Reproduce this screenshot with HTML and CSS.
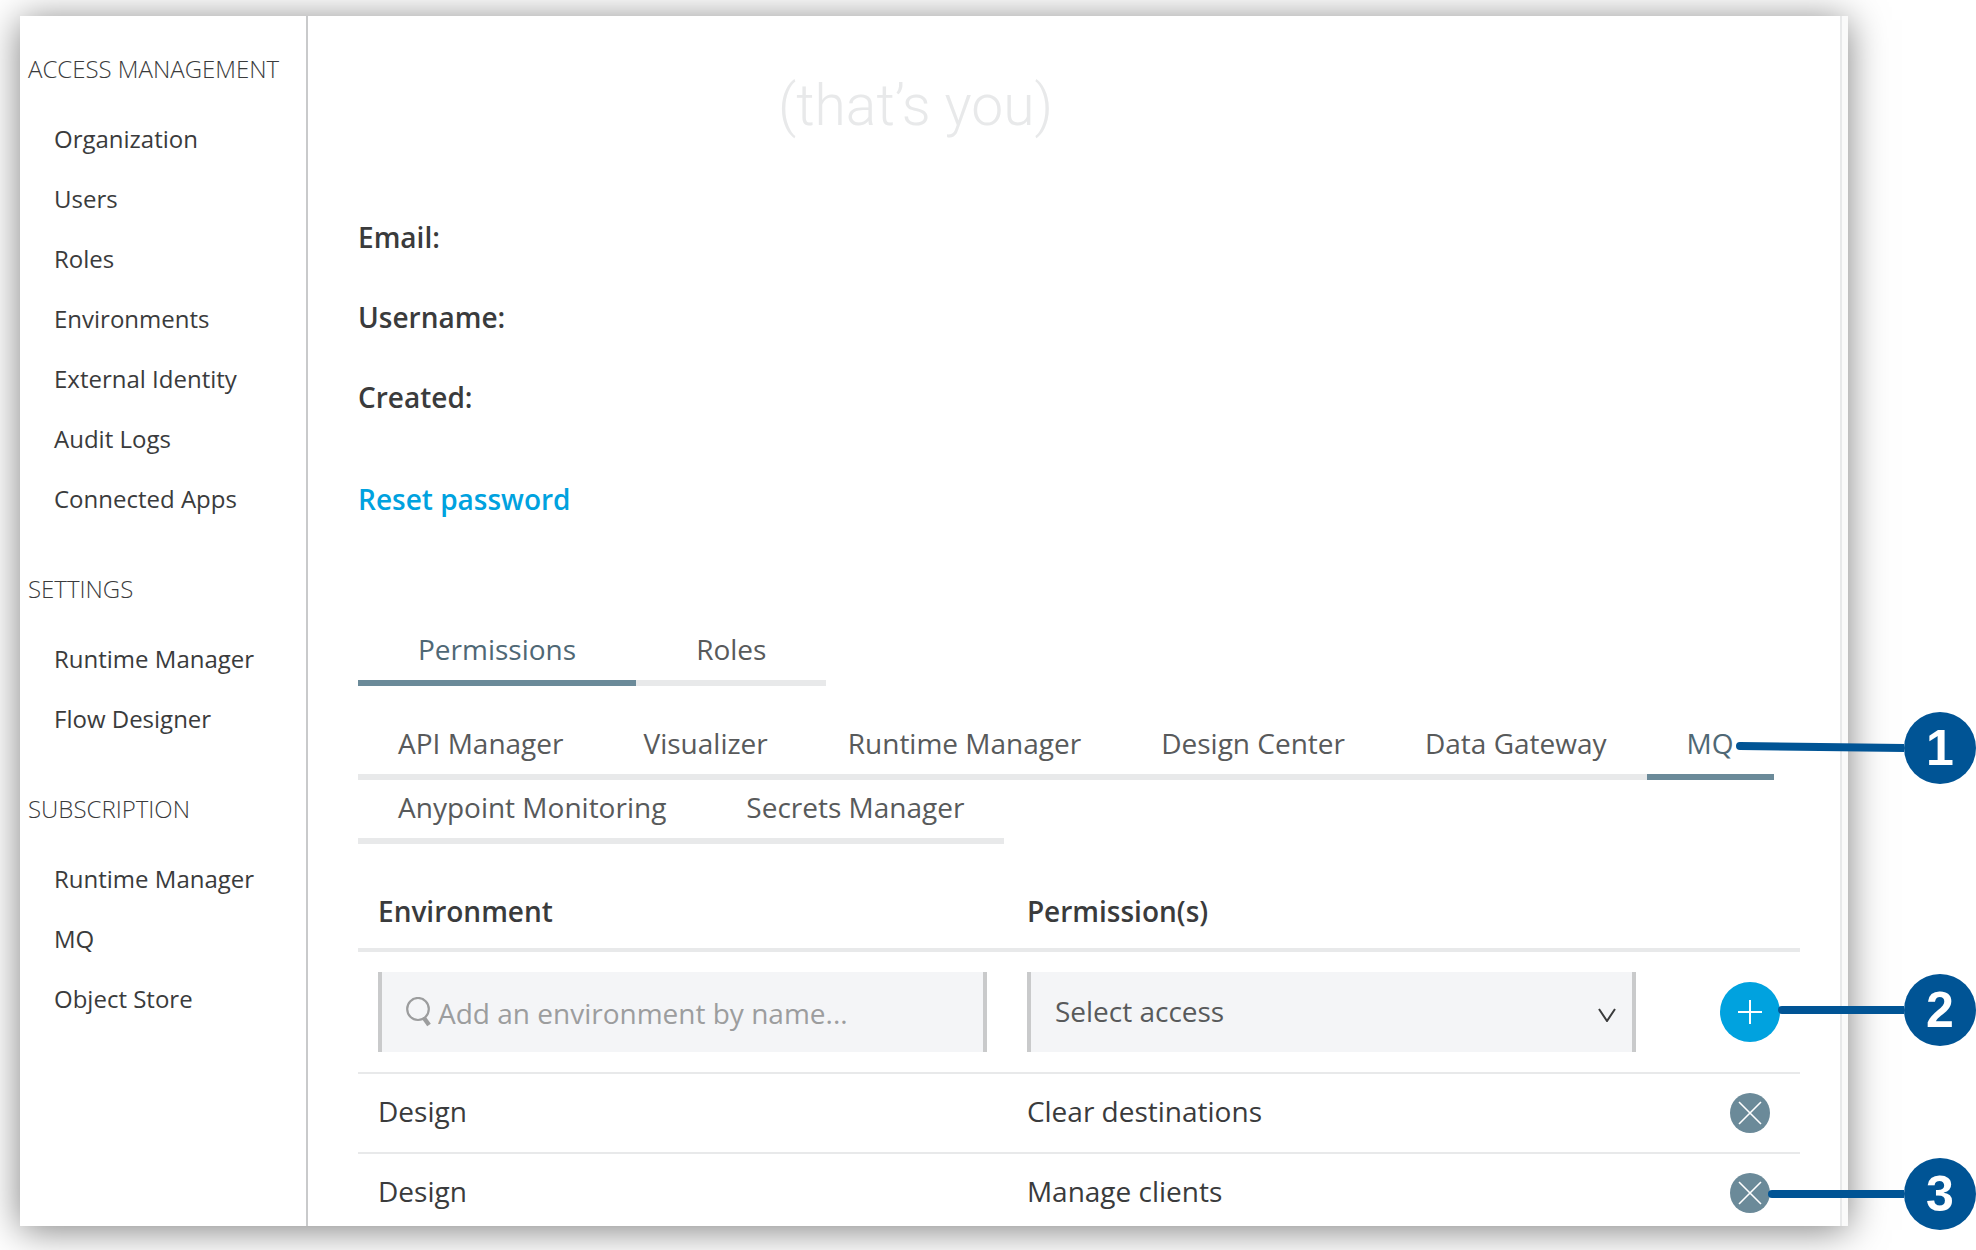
FILE: index.html
```html
<!DOCTYPE html>
<html lang="en">
<head>
<meta charset="utf-8">
<title>Access Management</title>
<link rel="stylesheet" href="styles.css">
</head>
<body>
<div class="window">
  <nav class="sidebar">
    <h2 class="nav-title">ACCESS MANAGEMENT</h2>
    <ul class="nav-list">
      <li><a href="#organization">Organization</a></li>
      <li><a href="#users">Users</a></li>
      <li><a href="#roles">Roles</a></li>
      <li><a href="#environments">Environments</a></li>
      <li><a href="#identity">External Identity</a></li>
      <li><a href="#audit">Audit Logs</a></li>
      <li><a href="#apps">Connected Apps</a></li>
    </ul>
    <h2 class="nav-title">SETTINGS</h2>
    <ul class="nav-list">
      <li><a href="#settings-runtime">Runtime Manager</a></li>
      <li><a href="#flow">Flow Designer</a></li>
    </ul>
    <h2 class="nav-title">SUBSCRIPTION</h2>
    <ul class="nav-list">
      <li><a href="#subscription-runtime">Runtime Manager</a></li>
      <li><a href="#mq">MQ</a></li>
      <li><a href="#store">Object Store</a></li>
    </ul>
  </nav>
  <main class="main">
    <h1 class="you">(that’s you)</h1>
    <dl class="profile">
      <dt>Email:</dt>
      <dt>Username:</dt>
      <dt>Created:</dt>
    </dl>
    <a class="reset" href="#reset">Reset password</a>
    <div class="tabs tabs-main">
      <button class="tab active" type="button">Permissions</button>
      <button class="tab" type="button">Roles</button>
    </div>
    <div class="tabs tabs-sub">
      <button class="tab" type="button">API Manager</button>
      <button class="tab" type="button">Visualizer</button>
      <button class="tab" type="button">Runtime Manager</button>
      <button class="tab" type="button">Design Center</button>
      <button class="tab" type="button">Data Gateway</button>
      <button class="tab active" type="button">MQ</button>
      <button class="tab" type="button">Anypoint Monitoring</button>
      <button class="tab" type="button">Secrets Manager</button>
    </div>
    <table class="grants">
      <thead>
        <tr><th class="col-wide">Environment</th><th class="col-wide">Permission(s)</th><th></th></tr>
      </thead>
      <tbody>
        <tr class="add-row">
          <td>
            <div class="field search">
              <svg class="search-icon" width="26" height="30" viewBox="0 0 26 30" aria-hidden="true"><ellipse cx="12" cy="12" rx="10.8" ry="11" fill="none" stroke="#9c9d9e" stroke-width="2.2"/><path d="M18 21L23 28" fill="none" stroke="#9c9d9e" stroke-width="4.4"/></svg>
              <input type="text" placeholder="Add an environment by name..." aria-label="Environment">
            </div>
          </td>
          <td>
            <div class="field">
              <select aria-label="Permission"><option>Select access</option></select>
              <svg class="chevron" width="18" height="14" viewBox="0 0 18 14" aria-hidden="true"><path d="M1 1L9 13L17 1" fill="none" stroke="#3a3b3c" stroke-width="2"/></svg>
            </div>
          </td>
          <td class="action">
            <button class="round add" type="button" aria-label="Add"><svg width="24" height="24" viewBox="0 0 24 24"><path d="M12 0V24M0 12H24" stroke="#fff" stroke-width="2"/></svg></button>
          </td>
        </tr>
        <tr>
          <td>Design</td><td>Clear destinations</td>
          <td class="action"><button class="round remove" type="button" aria-label="Remove"><svg width="24" height="24" viewBox="0 0 24 24"><path d="M1 1L23 23M23 1L1 23" stroke="#fff" stroke-width="1.6"/></svg></button></td>
        </tr>
        <tr>
          <td>Design</td><td>Manage clients</td>
          <td class="action"><button class="round remove" type="button" aria-label="Remove"><svg width="24" height="24" viewBox="0 0 24 24"><path d="M1 1L23 23M23 1L1 23" stroke="#fff" stroke-width="1.6"/></svg></button></td>
        </tr>
      </tbody>
    </table>
  </main>
  <div class="scroll-track"></div>
</div>
<div class="callout callout-1">
  <svg width="172" height="12" viewBox="0 0 172 12" aria-hidden="true"><path d="M8 4L172 6" stroke="#005495" stroke-width="8" stroke-linecap="round"/></svg>
  <span class="badge">1</span>
</div>
<div class="callout callout-2">
  <svg width="130" height="12" viewBox="0 0 130 12" aria-hidden="true"><path d="M8 6H130" stroke="#005495" stroke-width="8" stroke-linecap="round"/></svg>
  <span class="badge">2</span>
</div>
<div class="callout callout-3">
  <svg width="140" height="12" viewBox="0 0 140 12" aria-hidden="true"><path d="M8 6H140" stroke="#005495" stroke-width="8" stroke-linecap="round"/></svg>
  <span class="badge">3</span>
</div>
</body>
</html>
```
FILE: styles.css
```css
* {
  box-sizing: border-box;
}

body {
  position: relative;
  height: 100vh;
  margin: 0;
  padding: 16px 128px 24px 20px;
  overflow: hidden;
  background: #fff;
  color: #3a3b3c;
  font-family: "Open Sans", sans-serif;
  font-size: 28px;
}

h1,
h2,
ul,
dl {
  margin: 0;
  padding: 0;
}

a {
  color: inherit;
  text-decoration: none;
}

button,
input,
select {
  margin: 0;
  padding: 0;
  border: 0;
  border-radius: 0;
  background: none;
  color: inherit;
  font: inherit;
}

.window {
  display: flex;
  height: 100%;
  overflow: hidden;
  background: #fff;
  box-shadow: 0 4px 36px rgba(0, 0, 0, 0.5);
}

.sidebar {
  flex: none;
  width: 288px;
  padding: 33px 0 0 8px;
  border-right: 2px solid #c9cacb;
  font-size: 24px;
}

.nav-title {
  margin-bottom: 20px;
  font-size: 24px;
  font-weight: 300;
  line-height: 40px;
}

.nav-list {
  margin-bottom: 40px;
  padding-left: 26px;
  line-height: 60px;
  list-style: none;
}

.main {
  flex: 1;
  min-width: 0;
  padding: 50px 40px 0 50px;
}

.you {
  padding-left: 420px;
  color: #e8e9ea;
  font-family: Roboto, sans-serif;
  font-size: 57px;
  font-weight: 300;
  line-height: 80px;
}

.profile {
  margin-top: 51px;
  font-weight: 600;
  line-height: 80px;
}

.reset {
  display: block;
  margin-top: 22px;
  color: #00a2df;
  font-weight: 600;
  line-height: 80px;
}

.tabs {
  display: flex;
  flex-wrap: wrap;
}

.tab {
  padding: 0 40px 4px;
  border-bottom: 6px solid #e8e9ea;
  color: #585a5b;
  line-height: 54px;
}

.tab.active {
  border-color: #6b8a99;
  color: #4f6875;
}

.tabs-main {
  margin-top: 83px;
}

.tabs-main .tab {
  padding: 0 60px 4px;
}

.tabs-sub {
  margin-top: 30px;
}

.grants {
  width: 100%;
  margin-top: 30px;
  border-spacing: 0;
  table-layout: fixed;
}

.grants th {
  height: 78px;
  padding: 0 20px;
  border-bottom: 4px solid #e8e9ea;
  font-weight: 600;
  text-align: left;
}

.col-wide {
  width: 45%;
}

.grants td {
  height: 80px;
  padding: 0 20px 4px;
  border-bottom: 2px solid #e8e9ea;
}

.grants .add-row td {
  height: 122px;
  padding: 20px;
}

.field {
  position: relative;
  display: flex;
  align-items: center;
  height: 80px;
  border: solid #c9cacb;
  border-width: 0 4px;
  background: #f4f5f7;
}

.field input,
.field select {
  flex: 1;
  min-width: 0;
  height: 100%;
}

.field select {
  padding: 0 60px 2px 24px;
  appearance: none;
  color: #585a5b;
}

.search {
  gap: 6px;
  padding-left: 24px;
}

.field input {
  padding-top: 2px;
}

.field input::placeholder {
  color: #9c9d9e;
}

.chevron {
  position: absolute;
  top: 36px;
  right: 16px;
}

.grants .action,
.grants .add-row .action {
  padding-right: 20px;
  padding-bottom: 0;
  padding-left: 64px;
}

.grants .add-row .action {
  padding-bottom: 20px;
}

.round {
  display: flex;
  align-items: center;
  justify-content: center;
  width: 40px;
  height: 40px;
  margin: 0 auto;
  border-radius: 50%;
  background: #6b8a99;
}

.add {
  width: 60px;
  height: 60px;
  background: #00a2df;
}

.scroll-track {
  flex: none;
  width: 8px;
  border-left: 2px solid #e8e9ea;
  background: #fafafa;
}

.callout {
  position: absolute;
  right: 0;
  display: flex;
  align-items: center;
}

.callout-1 {
  top: 712px;
}

.callout-2 {
  top: 974px;
}

.callout-3 {
  top: 1158px;
}

.badge {
  width: 72px;
  border-radius: 50%;
  background: #005495;
  color: #fff;
  font-family: "Liberation Sans", sans-serif;
  font-size: 50px;
  font-weight: 700;
  line-height: 72px;
  text-align: center;
}
```
